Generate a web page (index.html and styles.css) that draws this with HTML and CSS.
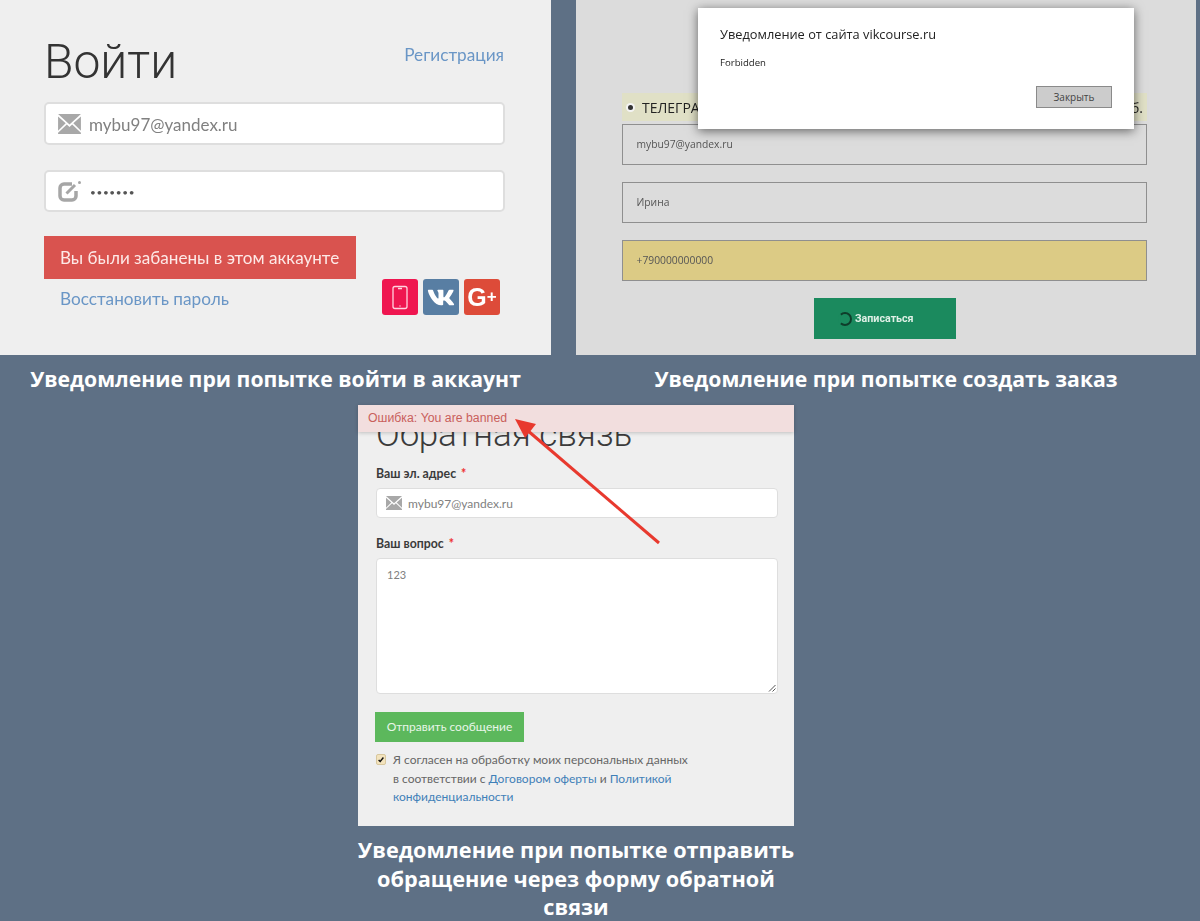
FILE: index.html
```html
<!DOCTYPE html>
<html lang="ru">
<head>
<meta charset="utf-8">
<title>Уведомления</title>
<link rel="stylesheet" href="styles.css">
</head>
<body>
<main class="page">
  <div class="top">
    <section class="login">
      <div class="login-head">
        <h1 class="login-title">Войти</h1>
        <a class="login-reg">Регистрация</a>
      </div>
      <div class="login-field">
        <svg class="ico-mail" viewBox="0 0 24 21"><path d="M0 0H24L12 11ZM0 2.5V17.5L8 9.8ZM24 2.5V17.5L16 9.8ZM9.2 11 12 13.6 14.8 11 24 19.6V21H0V19.6Z"/></svg>
        <span>mybu97@yandex.ru</span>
      </div>
      <div class="login-field login-field-2">
        <svg class="ico-edit" viewBox="0 0 24 22"><path class="edit-box" d="M14 4H6A4 4 0 0 0 2 8V16A4 4 0 0 0 6 20H14A4 4 0 0 0 18 16V11"/><path class="edit-pen" d="M8.500 13.500 17 5"/><circle class="edit-dot" cx="21.500" cy="2.500" r="1.500"/></svg>
        <span class="dots">•••••••</span>
      </div>
      <div class="ban">Вы были забанены в этом аккаунте</div>
      <div class="login-foot">
        <a class="restore">Восстановить пароль</a>
        <div class="socials">
          <span class="soc soc-phone"><svg viewBox="0 0 36 36"><rect x="11" y="7.500" width="14" height="22" rx="2"/><path d="M16 9.500H20M17.500 27H18.500"/></svg></span>
          <span class="soc soc-vk"><svg viewBox="0 0 576 512"><path d="M545 117.7c3.7-12.5 0-21.700-17.800-21.700h-58.900c-15 0-21.900 7.900-25.600 16.700 0 0-31.900 74.100-71.200 122.100-12.700 12.700-18.500 16.800-25.500 16.800-3.700 0-8.700-4.100-8.700-16.600V117.700c0-15-4.200-21.700-16.600-21.700h-92.600c-9.400 0-15 7-15 13.500 0 14.200 21.200 17.500 23.400 57.500v86.800c0 19-3.400 22.500-10.900 22.500-20 0-68.600-73.400-97.400-157.400-5.800-16.300-11.500-22.900-26.600-22.900H38.800c-16.800 0-20.200 7.900-20.200 16.700 0 15.600 20 93.100 93.100 195.500C160.400 378.100 229 416 291.400 416c37.500 0 42.100-8.400 42.100-22.900 0-66.800-3.400-73.100 15.400-73.100 8.700 0 23.700 4.400 58.700 38.100 40 40 46.600 57.900 69 57.900h58.900c16.800 0 25.300-8.400 20.400-25-11.200-34.900-86.900-106.700-90.300-111.500-8.700-11.200-6.200-16.200 0-26.200.1-.1 72-101.300 79.400-135.600z"/></svg></span>
          <span class="soc soc-g">G<span class="soc-plus">+</span></span>
        </div>
      </div>
    </section>

    <section class="order">
      <div class="strip">
        <span class="strip-left"><i class="radio"></i>ТЕЛЕГРАМ</span>
        <span>руб.</span>
      </div>
      <div class="order-field">mybu97@yandex.ru</div>
      <div class="order-field">Ирина</div>
      <div class="order-field order-field-warn">+790000000000</div>
      <div class="order-submit"><i class="spinner"></i>Записаться</div>
      <div class="dialog">
        <div class="dialog-title">Уведомление от сайта vikcourse.ru</div>
        <div class="dialog-text">Forbidden</div>
        <div class="dialog-foot"><span class="dialog-btn">Закрыть</span></div>
      </div>
    </section>

    <h2 class="caption">Уведомление при попытке войти в аккаунт</h2>
    <h2 class="caption">Уведомление при попытке создать заказ</h2>
  </div>

  <section class="feedback">
    <div class="alert">Ошибка: You are banned</div>
    <h2 class="fb-title">Обратная связь</h2>
    <div class="fb-label">Ваш эл. адрес <b class="req">*</b></div>
    <div class="fb-input">
      <svg class="ico-mail ico-mail-sm" viewBox="0 0 24 21"><path d="M0 0H24L12 11ZM0 2.5V17.5L8 9.8ZM24 2.5V17.5L16 9.8ZM9.2 11 12 13.6 14.8 11 24 19.6V21H0V19.6Z"/></svg>
      <span>mybu97@yandex.ru</span>
    </div>
    <div class="fb-label fb-label-2">Ваш вопрос <b class="req">*</b></div>
    <div class="fb-area">123
      <svg class="grip" viewBox="0 0 8 8"><path d="M7.500 1 1 7.500M7.500 4.500 4.500 7.500"/></svg>
    </div>
    <div class="fb-send">Отправить сообщение</div>
    <div class="fb-consent">
      <span class="check"><svg viewBox="0 0 10 10"><path d="M2 5.500 4 7.500 8 2.500"/></svg></span>
      <p>Я согласен на обработку моих персональных данных<br>в соответствии с <a>Договором оферты</a> и <a>Политикой</a><br><a>конфиденциальности</a></p>
    </div>
  </section>
  <h2 class="caption caption-wide">Уведомление при попытке отправить<br>обращение через форму обратной<br>связи</h2>

  <svg class="arrow" viewBox="0 0 1200 921"><path class="arrow-line" d="M659 543 527 430"/><path class="arrow-head" d="M515 419 536 424 525 438Z"/></svg>
</main>
</body>
</html>
```
FILE: styles.css
```css
* { box-sizing: border-box; }
html, body { margin: 0; padding: 0; }
body { background: #5e7085; font-family: "Lato", "Liberation Sans", sans-serif; }
.page { position: relative; width: 1200px; height: 921px; overflow: hidden; background: #5e7085; }
h1, h2, p { margin: 0; font-weight: normal; }
svg { display: block; }

.top { display: grid; grid-template-columns: 551px 620px; column-gap: 25px; grid-template-rows: 355px 50px; }

.caption { font-family: "Open Sans", sans-serif; font-weight: 700; font-size: 21.200px; line-height: 28.500px; color: #fff; text-align: center; align-self: center; margin-top: -1px; }
.caption-wide { width: 460px; margin: 10px 0 0 346px; font-size: 21.700px; }

/* login */
.login { background: #efefef; padding: 0 46px 0 44px; color: #333; filter: blur(.35px); }
.login-head { display: flex; justify-content: space-between; height: 102px; }
.login-title { font-family: "Roboto", sans-serif; font-weight: 300; font-size: 48px; line-height: 60px; padding-top: 32px; color: #333; }
.login-reg { font-size: 17.200px; color: #6a96c6; line-height: 20px; margin: 45px 1px 0 0; }
.login-field { height: 43px; width: 461px; background: #fff; border: 2px solid #dedede; border-radius: 5px; display: flex; align-items: center; padding-left: 12px; font-size: 17px; color: #808080; }
.login-field span { margin-left: 8px; padding-top: 2px; }
.login-field-2 { margin-top: 25px; height: 42px; }
.ico-mail { width: 23px; height: 20px; fill: #a8a8a8; flex: none; }
.ico-mail-sm { width: 16px; height: 14px; }
.ico-edit { width: 24px; height: 22px; flex: none; }
.edit-box { fill: none; stroke: #a6a6a6; stroke-width: 3.500; }
.edit-pen { fill: none; stroke: #a6a6a6; stroke-width: 3; }
.edit-dot { fill: #a6a6a6; }
.login-field .dots { color: #555; font-size: 10px; letter-spacing: .65px; margin-left: 8px; }
.ban { margin-top: 24px; width: 312px; height: 43px; background: #d9534f; color: #fde9e7; font-size: 17.100px; line-height: 44px; padding-left: 16px; white-space: nowrap; }
.login-foot { display: flex; justify-content: space-between; }
.restore { font-size: 17.200px; color: #6a96c6; margin: 9px 0 0 16px; line-height: 22px; }
.socials { display: flex; gap: 5px; margin-right: 5px; }
.soc { width: 36px; height: 36px; border-radius: 3px; display: flex; align-items: center; justify-content: center; color: #fff; }
.soc-phone { background: #ef1650; }
.soc-phone svg { width: 36px; height: 36px; fill: none; stroke: #ffd3df; stroke-width: 1.300; }
.soc-vk { background: #587ea3; }
.soc-vk svg { width: 28px; height: 25px; fill: #fff; }
.soc-g { background: #dd4b39; font-family: "Liberation Sans", sans-serif; font-weight: 700; font-size: 25px; }
.soc-plus { font-size: 17px; }

/* order */
.order { position: relative; background: #dcdcdc; padding: 93px 49px 0 46px; font-family: "Open Sans", sans-serif; }
.strip { height: 28px; background: #e0e0c6; display: flex; justify-content: space-between; align-items: center; padding: 0 4px 0 5px; color: #222; font-size: 14px; filter: blur(.3px); }
.strip-left { display: flex; align-items: center; }
.radio { width: 5px; height: 5px; border-radius: 50%; background: #333; box-shadow: 0 0 0 2px #f4f4f4; margin: 0 9px 0 1px; }
.order-field { height: 41px; margin-bottom: 17px; border: 1.500px solid #8f8f8f; padding-left: 13.500px; line-height: 38px; font-size: 10.300px; color: #555; filter: blur(.3px); }
.strip + .order-field { margin-top: 3px; }
.order-field-warn { background: #dccb85; }
.order-submit { width: 142px; height: 41px; margin-left: 192px; background: #1b8a5e; color: #dff0e6; font-family: "Roboto", sans-serif; font-weight: 700; font-size: 10.700px; display: flex; align-items: center; padding-left: 24px; filter: blur(.3px); }
.spinner { width: 14px; height: 14px; border-radius: 50%; border: 2.500px solid #0f3d2a; border-left-color: #1b8a5e; margin-right: 3px; }
.dialog { position: absolute; left: 122px; top: 8px; width: 436px; height: 121px; background: #fff; box-shadow: 0 2px 10px rgba(0,0,0,.55); padding: 18px 22px; color: #222; }
.dialog-title { font-size: 12.800px; line-height: 17px; filter: blur(.25px); }
.dialog-text { font-size: 9.600px; line-height: 14px; margin-top: 13px; filter: blur(.25px); }
.dialog-foot { display: flex; justify-content: flex-end; margin-top: 16px; }
.dialog-btn { width: 76px; height: 22px; background: #ccc; border: 1px solid #8a8a8a; font-size: 10px; line-height: 20px; text-align: center; color: #444; }

/* feedback */
.feedback { position: relative; width: 436px; height: 421px; margin-left: 358px; background: #efefef; padding: 0 16px 0 18px; color: #3b3b3b; }
.alert { position: absolute; z-index: 1; left: 0; top: 0; width: 100%; height: 27px; background: #f2dede; box-shadow: 0 1px 4px rgba(0,0,0,.2); color: #c9605c; font-family: "Liberation Sans", sans-serif; font-size: 12.300px; line-height: 26px; padding-left: 10px; }
.fb-title { font-family: "Roboto", sans-serif; font-weight: 300; font-size: 35px; line-height: 44px; padding-top: 8px; height: 60px; }
.fb-label { font-weight: 700; font-size: 12.300px; line-height: 16px; padding-top: 1px; height: 16px; }
.fb-label-2 { margin-top: 17px; }
.req { color: #e33; margin-left: 2px; }
.fb-input { margin-top: 7px; height: 30px; background: #fff; border: 1.500px solid #dedede; border-radius: 4px; display: flex; align-items: center; padding-left: 9px; font-size: 12px; color: #808080; }
.fb-input span { margin-left: 6px; }
.fb-area { position: relative; margin-top: 7px; height: 136px; background: #fff; border: 1.500px solid #dedede; border-radius: 4px; padding: 8px 10px; font-size: 11px; line-height: 15px; color: #808080; }
.grip { position: absolute; right: 1px; bottom: 1px; width: 8px; height: 8px; fill: none; stroke: #555; stroke-width: 1; }
.fb-send { margin: 18px 0 0 -1px; width: 149px; height: 30px; background: #5cb85c; color: #e8f6e8; font-size: 12px; line-height: 30px; text-align: center; }
.fb-consent { display: flex; margin-top: 9px; font-size: 12px; line-height: 18.500px; color: #666; }
.fb-consent a { color: #3f80b8; }
.check { flex: none; width: 10px; height: 11px; margin: 3px 7px 0 0; background: #f3e3bd; border: 1px solid #d8c79d; border-radius: 2px; }
.check svg { width: 8px; height: 9px; fill: none; stroke: #111; stroke-width: 1.800; }

/* arrow */
.arrow { position: absolute; z-index: 2; left: 0; top: 0; width: 1200px; height: 921px; pointer-events: none; }
.arrow-line { stroke: #e8392e; stroke-width: 3; fill: none; }
.arrow-head { fill: #e8392e; }
```
